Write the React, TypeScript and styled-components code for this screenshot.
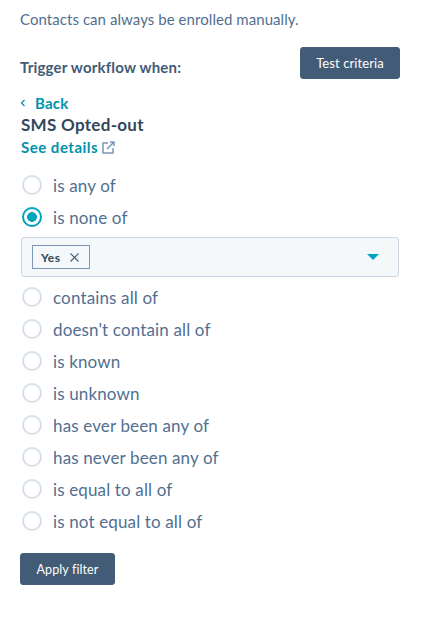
import React from 'react'
import styled, { createGlobalStyle } from 'styled-components'

const operatorsAfter = [
  'contains all of',
  "doesn't contain all of",
  'is known',
  'is unknown',
  'has ever been any of',
  'has never been any of',
  'is equal to all of',
  'is not equal to all of',
]

export default function App() {
  return (
    <>
      <GlobalStyle />
      <Panel>
        <Note>Contacts can always be enrolled manually.</Note>
        <TriggerRow>
          <TriggerLabel>Trigger workflow when:</TriggerLabel>
          <DarkButton>Test criteria</DarkButton>
        </TriggerRow>
        <BackLink>
          <svg width="6" height="8" viewBox="0 0 6 8" fill="none">
            <path d="M4.5 1 L1.5 4 L4.5 7" stroke="#0091ae" strokeWidth="1.2" />
          </svg>
          Back
        </BackLink>
        <PropertyName>SMS Opted-out</PropertyName>
        <DetailsLink>
          See details
          <svg width="13" height="13" viewBox="0 0 13 13" fill="none" stroke="#7c98b6" strokeWidth="1.5">
            <path d="M6 2 H1 V12 H11 V7" />
            <path d="M5 8 L12 1 M8 1 H12 V5" />
          </svg>
        </DetailsLink>
        <Options>
          <Option>
            <Radio />
            is any of
          </Option>
          <Option>
            <Radio $checked />
            is none of
          </Option>
          <Select>
            <Tag>
              Yes
              <svg width="9" height="9" viewBox="0 0 9 9" stroke="#425b76" strokeWidth="1.1">
                <path d="M0.5 0.5 L8.5 8.5 M8.5 0.5 L0.5 8.5" />
              </svg>
            </Tag>
            <Caret />
          </Select>
          {operatorsAfter.map((label) => (
            <Option key={label}>
              <Radio />
              {label}
            </Option>
          ))}
        </Options>
        <ApplyButton>Apply filter</ApplyButton>
      </Panel>
    </>
  )
}

const GlobalStyle = createGlobalStyle`
  html, body {
    margin: 0;
    background: #fff;
    font-family: "Lato", "Open Sans", sans-serif;
    color: #33475b;
  }
`

const Panel = styled.div`
  width: 421px;
  height: 622px;
  box-sizing: border-box;
  padding: 10px 21px 0 20px;
  display: flex;
  flex-direction: column;
  align-items: flex-start;
`

const Note = styled.div`
  font-size: 15px;
  line-height: 18px;
  letter-spacing: 0.06px;
  color: #516f90;
`

const TriggerRow = styled.div`
  width: 100%;
  margin-top: 19px;
  height: 32px;
  display: flex;
  align-items: center;
  justify-content: space-between;
`

const TriggerLabel = styled.div`
  font-size: 15px;
  font-weight: 700;
  letter-spacing: 0.2px;
  padding-top: 8px;
  color: #425b76;
`

const DarkButton = styled.button`
  width: 100px;
  height: 32px;
  padding: 0;
  border: 1px solid #425b76;
  border-radius: 3px;
  background: #425b76;
  color: #fff;
  font-family: inherit;
  font-size: 13px;
  letter-spacing: 0.1px;
`

const BackLink = styled.div`
  margin-top: 15px;
  display: flex;
  align-items: center;
  gap: 9px;
  font-size: 15px;
  line-height: 18px;
  font-weight: 700;
  letter-spacing: 0.2px;
  color: #0091ae;
`

const PropertyName = styled.div`
  margin: 2px 0 0 1px;
  font-size: 17px;
  line-height: 22px;
  font-weight: 700;
  letter-spacing: 0.3px;
  color: #33475b;
`

const DetailsLink = styled.div`
  margin: 1px 0 0 1px;
  display: flex;
  align-items: center;
  gap: 4px;
  font-size: 15px;
  line-height: 20px;
  font-weight: 700;
  letter-spacing: 0.5px;
  color: #0091ae;
`

const Options = styled.div`
  width: 100%;
  margin-top: 12px;
  display: flex;
  flex-direction: column;
`

const Option = styled.div`
  height: 32px;
  display: flex;
  align-items: center;
  gap: 11px;
  font-size: 17px;
  letter-spacing: 0.14px;
  color: #516f90;
`

const Radio = styled.span<{ $checked?: boolean }>`
  width: 20px;
  height: 20px;
  margin-left: 2px;
  box-sizing: border-box;
  flex: none;
  border-radius: 50%;
  border: ${(p) => (p.$checked ? '2px solid #00a4bd' : '2px solid #d6e0ea')};
  background: ${(p) => (p.$checked ? 'radial-gradient(circle, #00a4bd 0 4.6px, #fff 5.2px)' : '#fff')};
`

const Select = styled.div`
  height: 40px;
  box-sizing: border-box;
  margin: 4px 1px 4px 1px;
  padding: 0 19px 0 10px;
  display: flex;
  align-items: center;
  justify-content: space-between;
  background: #f5f8fa;
  border: 1px solid #cbd6e2;
  border-radius: 3px;
`

const Tag = styled.div`
  height: 24px;
  box-sizing: border-box;
  padding: 0 10px 0 8px;
  display: flex;
  align-items: center;
  gap: 10px;
  background: #f5f8fa;
  border: 1px solid #7c98b6;
  font-size: 12px;
  font-weight: 700;
  letter-spacing: 0.4px;
  color: #33475b;
`

const Caret = styled.span`
  width: 0;
  height: 0;
  border-left: 6px solid transparent;
  border-right: 6px solid transparent;
  border-top: 6px solid #00a4bd;
`

const ApplyButton = styled(DarkButton)`
  width: 95px;
  margin-top: 16px;
  font-size: 12.5px;
`
